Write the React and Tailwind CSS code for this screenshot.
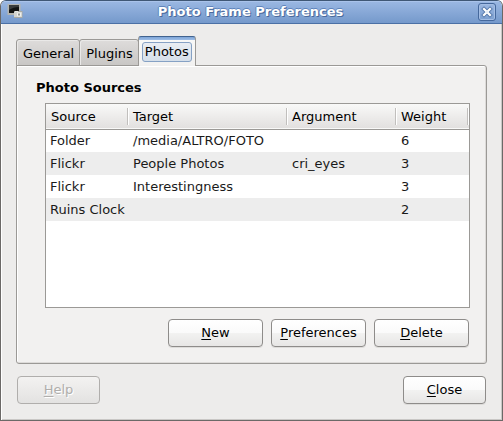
import React from "react";

const rows = [
  ["Folder", "/media/ALTRO/FOTO", "", "6"],
  ["Flickr", "People Photos", "cri_eyes", "3"],
  ["Flickr", "Interestingness", "", "3"],
  ["Ruins Clock", "", "", "2"],
];

function Mnemonic({ text }) {
  return (
    <span>
      <span className="underline decoration-1 underline-offset-2">{text[0]}</span>
      {text.slice(1)}
    </span>
  );
}

function PushButton({ text, wide = false, disabled = false }) {
  return (
    <button
      type="button"
      disabled={disabled}
      className={`flex h-7 items-center justify-center rounded-[4px] border pb-px ${
        wide ? "w-[95px]" : "w-[83px]"
      } ${
        disabled
          ? "border-[#b0aeac] bg-linear-to-b from-[#f3f2f1] from-0% via-[#ebeae9] via-50% to-[#e3e2e1] text-[#b0aeac] [text-shadow:1px_1px_0_#ffffff]"
          : "border-[#8e8c8a] bg-[linear-gradient(#ffffff,#fafafa_50%,#f2f2f1_51%,#e7e6e5)] text-black shadow-[0_1px_0_#dddcda]"
      }`}
    >
      <Mnemonic text={text} />
    </button>
  );
}

function Tab({ text }) {
  return (
    <button
      type="button"
      role="tab"
      aria-selected="false"
      className="-mr-px h-[27px] rounded-t-[3px] border border-[#9b9996] bg-linear-to-b from-[#dedcdb] to-[#c9c7c5] pt-[2px] pr-[5px] pl-[6px] shadow-[inset_1px_1px_0_#eae9e8]"
    >
      {text}
    </button>
  );
}

function AppIcon() {
  return (
    <svg width="16" height="16" viewBox="0 0 16 16" aria-hidden="true">
      <rect x="0.5" y="0" width="13" height="11" rx="0.5" fill="#b4b5b0" />
      <rect x="2" y="1" width="10" height="8" fill="#121413" />
      <path d="M2 1h10v2c-4 0-7 1-10 3z" fill="#3a3d3c" />
      <rect x="7" y="7" width="8.5" height="7" rx="0.5" fill="#a9aaa5" />
      <rect x="7" y="8" width="8" height="5" fill="#d4d5d0" />
      <rect x="8" y="7" width="3" height="1" fill="#e6e6e2" />
      <rect x="10" y="8.5" width="4" height="4" rx="1" fill="#f1f1ed" />
      <rect x="11" y="9.5" width="2" height="2" fill="#90948f" />
    </svg>
  );
}

export default function App() {
  return (
    <div className="bg-[#ffffff]">
      <main className="flex min-h-screen flex-col overflow-hidden rounded-t-[6px] border border-[#6b6967] border-t-[#3f5775] bg-[#edeceb] font-['DejaVu_Sans',sans-serif] text-[13px] leading-4 text-black">
        <header className="flex h-[23px] items-center border-b border-[#4b70a5] bg-linear-to-b from-[#9bb8e3] to-[#7599cb] px-[6px] shadow-[inset_0_1px_0_#a9c3ea]">
          <AppIcon />
          <h1 className="flex-1 text-center font-bold text-white [text-shadow:1px_1px_0_#4a6a9c,-1px_0_0_#5f84bb,0_-1px_0_#5f84bb]">
            Photo Frame Preferences
          </h1>
          <button
            type="button"
            aria-label="Close window"
            className="flex size-[18px] items-center justify-center rounded-[3px] border border-[#45689c] bg-linear-to-b from-[#9ab6e0] to-[#7c9fd0] shadow-[inset_0_0_0_1px_#a3bde4]"
          >
            <svg width="12" height="12" viewBox="0 0 12 12" aria-hidden="true">
              <path d="M3 3l6 6M9 3l-6 6" stroke="#5578ab" strokeWidth="4" strokeLinecap="square" />
              <path d="M3 3l6 6M9 3l-6 6" stroke="#ffffff" strokeWidth="2.2" strokeLinecap="square" />
              <rect x="5.3" y="5.3" width="1.4" height="1.4" fill="#cfdcf0" />
            </svg>
          </button>
        </header>

        <div className="flex flex-1 flex-col px-[15px] pt-3 pb-4 shadow-[inset_1px_0_0_#ffffff,inset_-1px_-1px_0_#c9c7c5]">
          <div role="tablist" className="relative -mb-px flex items-end">
            <Tab text="General" />
            <Tab text="Plugins" />
            <button
              type="button"
              role="tab"
              aria-selected="true"
              className="h-[30px] rounded-t-[3px] border border-b-0 border-[#9b9996] border-t-[#41638f] bg-[linear-gradient(#7ea5d8_0px,#9dbde6_3px,#f8f8f7_3px,#f2f1f0)] px-[3px] pt-1 pb-1"
            >
              <span className="flex h-5 items-center rounded-[3px] border border-[#86a1c4] bg-linear-to-b from-[#e9edf2] to-[#d5dfea] px-[2px]">
                Photos
              </span>
            </button>
          </div>

          <section className="rounded-[3px] rounded-tl-none border border-[#9b9996] bg-[#f2f1f0] pt-[14px] pr-4 pb-4 pl-[19px] shadow-[inset_1px_1px_0_#ffffff,inset_-1px_-1px_0_#dddbd9]">
            <h2 className="font-bold">Photo Sources</h2>
            <div className="mt-[7px] ml-[9px] h-[205px] border border-[#9b9996] bg-white">
              <table className="w-full table-fixed border-collapse text-left">
                <colgroup>
                  <col className="w-[82px]" />
                  <col className="w-[159px]" />
                  <col className="w-[109px]" />
                  <col />
                </colgroup>
                <thead>
                  <tr className="h-[25px] border-b border-[#9b9996] bg-linear-to-b from-[#f9f9f8] to-[#e2e0df]">
                    {["Source", "Target", "Argument", "Weight"].map((name) => (
                      <th key={name} className="p-0 font-normal last:pr-px">
                        <div className="border-r border-[#c1bfbd] pt-px pl-[5px] shadow-[1px_0_0_#ffffff]">{name}</div>
                      </th>
                    ))}
                  </tr>
                </thead>
                <tbody className="text-[#1a1a1a]">
                  {rows.map((row, i) => (
                    <tr key={i} className="h-[23px] even:bg-[#ededed]">
                      {row.map((cell, j) => (
                        <td key={j} className="p-0 pl-[5px] whitespace-nowrap first:pl-1">
                          {cell}
                        </td>
                      ))}
                    </tr>
                  ))}
                </tbody>
              </table>
            </div>
            <div className="mt-[11px] flex justify-end gap-2 pr-px">
              <PushButton text="New" wide />
              <PushButton text="Preferences" wide />
              <PushButton text="Delete" wide />
            </div>
          </section>

          <footer className="mt-3 flex justify-between px-px">
            <PushButton text="Help" disabled />
            <PushButton text="Close" />
          </footer>
        </div>
      </main>
    </div>
  );
}
